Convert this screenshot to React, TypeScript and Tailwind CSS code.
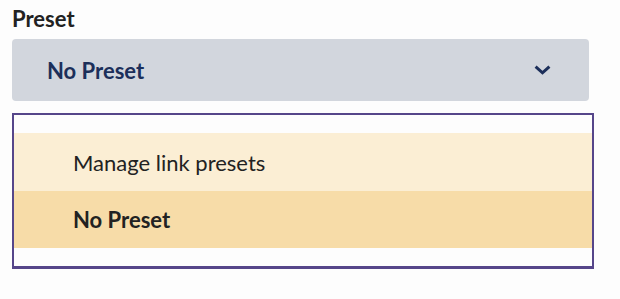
import React from "react";

export default function App() {
  return (
    <div className="w-[620px] h-[299px] bg-[#fdfdfd] px-3 pt-[5px] text-[#222222]" style={{ fontFamily: "Lato, 'Open Sans', sans-serif" }}>
      <div className="text-[22px] font-bold leading-[28px] text-[#222]">Preset</div>
      <div className="mt-[6px] w-[577px] h-[62px] rounded-[4px] bg-[#d2d6dd] flex items-center justify-between pl-[35px] pr-[38px]">
        <span className="text-[22px] font-bold text-[#1c2f5a]">No Preset</span>
        <svg width="17" height="10" viewBox="0 0 17 10" fill="none">
          <path d="M1.6 1.6 L8.5 7.8 L15.4 1.6" stroke="#1c2f5a" strokeWidth="3" strokeLinecap="butt" strokeLinejoin="miter" />
        </svg>
      </div>
      <div className="mt-[12px] w-[582px] border-2 border-b-[3px] border-[#56468a] py-[18px] bg-[#fdfdfd]">
        <div className="h-[58px] bg-[#fbeed4] flex items-center pl-[59px] text-[22px] text-[#222]">Manage link presets</div>
        <div className="h-[57px] bg-[#f7dca8] flex items-center pl-[59px] text-[22px] font-bold text-[#222]">No Preset</div>
      </div>
    </div>
  );
}
